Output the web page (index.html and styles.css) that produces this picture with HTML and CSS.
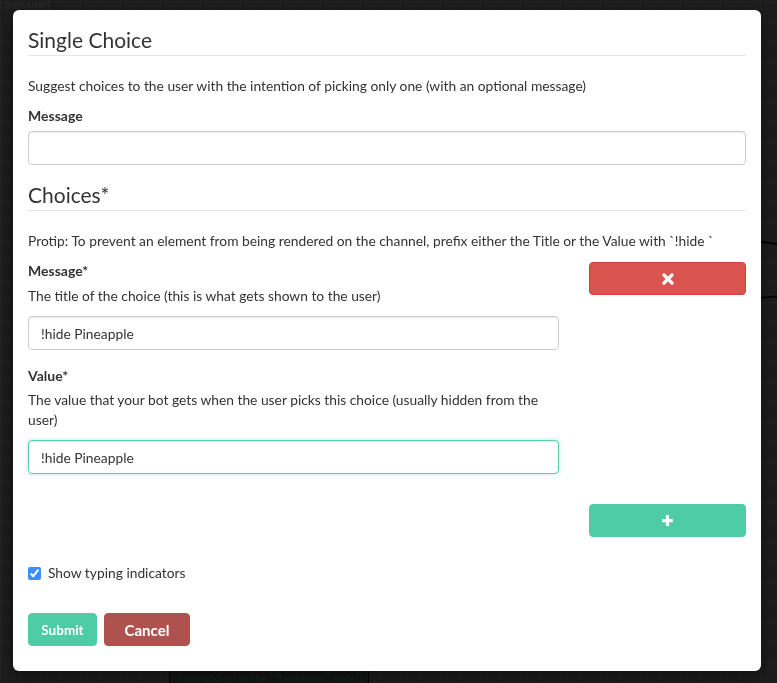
FILE: index.html
```html
<!DOCTYPE html>
<html>
<head>
<meta charset="utf-8">
<link rel="stylesheet" href="styles.css">
</head>
<body>
<div class="backdrop">
  <div class="bg-rename">(rename)</div>
  <div class="bg-node"><span>flow and go to the "Transitions" panel)</span></div>
  <div class="bg-edge bg-edge-1"></div>
  <div class="bg-edge bg-edge-2"></div>
</div>

<div class="modal">
  <h3 class="section-title first">Single Choice</h3>
  <p class="help">Suggest choices to the user with the intention of picking only one (with an optional message)</p>
  <label class="label">Message</label>
  <input class="input" type="text" value="">

  <h3 class="section-title second">Choices*</h3>
  <p class="help">Protip: To prevent an element from being rendered on the channel, prefix either the Title or the Value with `!hide `</p>

  <div class="choice-row">
    <div class="choice-fields">
      <label class="label">Message*</label>
      <p class="desc">The title of the choice (this is what gets shown to the user)</p>
      <input class="input" type="text" value="!hide Pineapple">
      <label class="label value-label">Value*</label>
      <p class="desc">The value that your bot gets when the user picks this choice (usually hidden from the user)</p>
      <input class="input focused" type="text" value="!hide Pineapple">
    </div>
    <div class="choice-side">
      <button class="btn btn-danger btn-block" type="button">
        <svg width="12" height="12" viewBox="0 0 12 12"><path d="M2 2 L10 10 M10 2 L2 10" stroke="#fff" stroke-width="3.2" stroke-linecap="round"/></svg>
      </button>
    </div>
  </div>

  <div class="add-row">
    <div></div>
    <button class="btn btn-success btn-block" type="button">
      <svg width="13" height="13" viewBox="0 0 12 12"><path d="M6 1 V11 M1 6 H11" stroke="#fff" stroke-width="3" stroke-linecap="butt"/></svg>
    </button>
  </div>

  <label class="check">
    <input type="checkbox" checked>
    <span>Show typing indicators</span>
  </label>

  <div class="actions">
    <button class="btn btn-success submit" type="button">Submit</button>
    <button class="btn btn-cancel cancel" type="button">Cancel</button>
  </div>
</div>
</body>
</html>
```

FILE: styles.css
```css
* { box-sizing: border-box; }

html, body {
  margin: 0;
  height: 100%;
}

body {
  background-color: #1d1d1d;
  background-image:
    repeating-linear-gradient(90deg, rgba(255,255,255,0.018) 0 1px, transparent 1px 20px),
    repeating-linear-gradient(0deg, rgba(255,255,255,0.018) 0 1px, transparent 1px 20px);
  font-family: Lato, "Open Sans", "Liberation Sans", sans-serif;
  color: #333;
  font-size: 13.8px;
  overflow: hidden;
}

.backdrop {
  position: fixed;
  inset: 0;
}

.bg-rename {
  position: absolute;
  left: 5px;
  top: 0;
  font-size: 12px;
  line-height: 10px;
  color: #2b2b2b;
}

.bg-node {
  position: absolute;
  left: 169px;
  top: 660px;
  width: 200px;
  height: 23px;
  border-left: 1px solid #050505;
  border-right: 1px solid #050505;
  background: #161616;
  padding: 12px 0 0 9px;
  font-size: 11px;
  line-height: 11px;
  color: #0f2a1b;
  white-space: nowrap;
  overflow: hidden;
}

.bg-edge {
  position: absolute;
  left: 755px;
  width: 30px;
  height: 2px;
  background: #050505;
}
.bg-edge-1 { top: 242px; transform: rotate(8deg); }
.bg-edge-2 { top: 296px; transform: rotate(-5deg); }

.modal {
  position: absolute;
  left: 13px;
  top: 10px;
  width: 748px;
  background: #fff;
  border-radius: 6px;
  padding: 15px 15px 25px;
  box-shadow: 0 5px 15px rgba(0,0,0,0.5);
}

.section-title {
  margin: 0;
  font-size: 21px;
  font-weight: 400;
  line-height: 26px;
  color: #333;
  padding-bottom: 2px;
  border-bottom: 1px solid #e5e5e5;
}
.section-title.first { margin-top: 2px; }
.section-title.second { margin-top: 17px; }

.help {
  margin: 20px 0 0;
  line-height: 20px;
}

.label {
  display: block;
  font-weight: 700;
  font-size: 14px;
  line-height: 20px;
  margin: 10px 0 5px;
}

.input {
  display: block;
  width: 100%;
  height: 34px;
  border: 1px solid #ccc;
  border-radius: 4px;
  padding: 6px 12px;
  font-family: inherit;
  font-size: 13.8px;
  color: #333;
  background: #fff;
  box-shadow: inset 0 1px 1px rgba(0,0,0,0.075);
  outline: none;
}

.input.focused {
  border-color: #58cdb0;
  box-shadow: inset 0 1px 1px rgba(0,0,0,0.075), 0 0 4px rgba(78,204,163,0.45);
}

.choice-row,
.add-row {
  display: grid;
  grid-template-columns: 531px 157px;
  column-gap: 30px;
}

.choice-side { padding-top: 11px; }

.desc {
  margin: 0 0 10px;
  line-height: 20px;
}

.value-label { margin-top: 16px; margin-bottom: 4px; }

.add-row { margin-top: 30px; }

.btn {
  display: inline-flex;
  align-items: center;
  justify-content: center;
  height: 33px;
  border: 1px solid transparent;
  border-radius: 4px;
  font-family: inherit;
  font-weight: 700;
  color: #fff;
  cursor: pointer;
  padding: 0 12px;
}

.btn-block { width: 100%; }

.btn-danger {
  background: #d9534f;
  border-color: #d43f3a;
}

.btn-success {
  background: #4ecca3;
  border-color: #4ecca3;
}

.btn-cancel {
  background: #ad524f;
  border-color: #ad524f;
}

.check {
  display: flex;
  align-items: center;
  margin-top: 26px;
  line-height: 20px;
}

.check input {
  width: 13px;
  height: 13px;
  margin: 0 7px 0 0;
  accent-color: #3b8ef5;
}

.actions {
  display: flex;
  gap: 7px;
  margin-top: 30px;
}

.submit {
  font-size: 13.5px;
  width: 69px;
}

.cancel {
  font-size: 15px;
  width: 86px;
}
```
